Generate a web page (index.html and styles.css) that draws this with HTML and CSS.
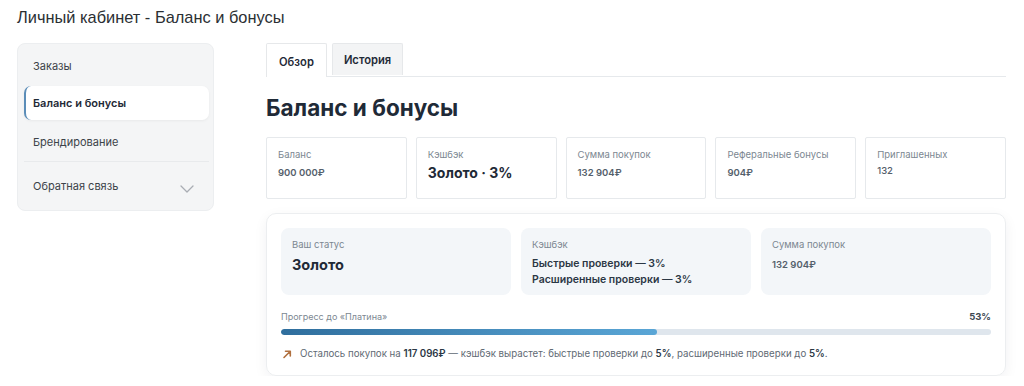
FILE: index.html
```html
<!DOCTYPE html>
<html lang="ru">
<head>
  <meta charset="UTF-8" />
  <meta name="viewport" content="width=device-width, initial-scale=1.0" />
  <title>Личный кабинет - Баланс и бонусы</title>
  <link rel="stylesheet" href="styles.css">
</head>
<body>
  <h1 class="page-title">Личный кабинет - Баланс и бонусы</h1>

  <div class="layout">
    <nav class="sidebar">
      <a class="side-item">Заказы</a>
      <a class="side-item active">Баланс и бонусы</a>
      <a class="side-item tall">Брендирование</a>
      <a class="side-item side-toggle">
        Обратная связь
        <svg class="chevron" width="14" height="8" viewBox="0 0 14 8"><path d="M1 1l6 6 6-6" fill="none" stroke="#a9adb3" stroke-width="1.3" stroke-linecap="round" stroke-linejoin="round"/></svg>
      </a>
    </nav>

    <main class="content">
      <div class="tabs">
        <div class="tab active">Обзор</div>
        <div class="tab">История</div>
      </div>

      <h2 class="heading">Баланс и бонусы</h2>

      <div class="stats">
        <div class="stat">
          <div class="stat-label">Баланс</div>
          <div class="stat-value">900 000₽</div>
        </div>
        <div class="stat">
          <div class="stat-label">Кэшбэк</div>
          <div class="stat-value big">Золото · 3%</div>
        </div>
        <div class="stat">
          <div class="stat-label">Сумма покупок</div>
          <div class="stat-value">132 904₽</div>
        </div>
        <div class="stat">
          <div class="stat-label">Реферальные бонусы</div>
          <div class="stat-value">904₽</div>
        </div>
        <div class="stat">
          <div class="stat-label">Приглашенных</div>
          <div class="stat-value plain">132</div>
        </div>
      </div>

      <section class="status-card">
        <div class="status-boxes">
          <div class="box">
            <div class="box-label">Ваш статус</div>
            <div class="box-value">Золото</div>
          </div>
          <div class="box">
            <div class="box-label">Кэшбэк</div>
            <div class="box-line">Быстрые проверки — 3%</div>
            <div class="box-line">Расширенные проверки — 3%</div>
          </div>
          <div class="box">
            <div class="box-label">Сумма покупок</div>
            <div class="box-sum">132 904₽</div>
          </div>
        </div>

        <div class="progress-head">
          <span>Прогресс до «Платина»</span>
          <b>53%</b>
        </div>
        <div class="progress-track"><div class="progress-fill" style="width: 53%"></div></div>

        <div class="hint">
          <svg width="10" height="10" viewBox="0 0 10 10"><path d="M2 8.5L8 2.5M3.5 2.2H8.3V7" fill="none" stroke="#b0703f" stroke-width="1.6" stroke-linecap="round" stroke-linejoin="round"/></svg>
          <span>Осталось покупок на <b>117 096₽</b> — кэшбэк вырастет: быстрые проверки до <b>5%</b>, расширенные проверки до <b>5%</b>.</span>
        </div>
      </section>
    </main>
  </div>
</body>
</html>
```

FILE: styles.css
```css
:root {
  --text: #1f2a37;
  --muted: #7b8794;
  --line: #e6e9ec;
  --soft: #f3f6f9;
}

* {
  box-sizing: border-box;
}

body {
  margin: 0;
  padding: 0 18px 0 17px;
  font-family: Inter, 'Noto Sans', Arial, sans-serif;
  background: #fff;
  color: var(--text);
}

.page-title {
  margin: 0;
  padding-top: 8px;
  height: 43px;
  font-family: 'Liberation Sans', Arial, sans-serif;
  font-size: 16.4px;
  font-weight: 400;
  color: #2b2f33;
}

.layout {
  display: flex;
  gap: 52px;
  align-items: flex-start;
}

/* sidebar */
.sidebar {
  width: 197px;
  flex-shrink: 0;
  background: #f4f5f6;
  border: 1px solid #eceef0;
  border-radius: 8px;
  padding: 3px 4px 0 6px;
  display: flex;
  flex-direction: column;
}

.side-item {
  display: flex;
  align-items: center;
  height: 37px;
  padding: 0 9px;
  font-size: 11px;
  color: #3c4349;
  cursor: pointer;
}

.side-item.tall {
  height: 39px;
  padding-top: 2px;
}

.side-item.active {
  height: 34px;
  margin: 2px 0 1px;
  background: #fff;
  border-radius: 7px;
  border-left: 2px solid #5b8db8;
  padding-left: 7px;
  font-weight: 600;
  color: var(--text);
  box-shadow: 0 1px 3px rgba(0, 0, 0, 0.05);
}

.side-toggle {
  height: 49px;
  border-top: 1px solid #e8eaec;
  margin-top: 1px;
  justify-content: space-between;
  padding-right: 15px;
}

.chevron {
  margin-top: 6px;
}

/* content */
.content {
  flex: 1;
  min-width: 0;
}

.tabs {
  display: flex;
  gap: 5px;
  border-bottom: 1px solid var(--line);
  height: 34px;
}

.tab {
  padding: 0 11px;
  height: 32px;
  display: flex;
  align-items: center;
  font-size: 11.2px;
  font-weight: 600;
  color: var(--text);
  background: #f3f4f5;
  border: 1px solid #e6e8ea;
  border-bottom: none;
  border-radius: 2px 2px 0 0;
}

.tab.active {
  background: #fff;
  height: 34px;
  padding: 2px 12px 0;
}

.heading {
  margin: 17px 0 15px;
  font-size: 22.5px;
  font-weight: 700;
  color: var(--text);
  line-height: 28px;
}

.stats {
  display: grid;
  grid-template-columns: repeat(5, 1fr);
  gap: 9px;
}

.stat {
  height: 62px;
  border: 1px solid var(--line);
  border-radius: 2px;
  padding: 11px 11px 0;
}

.stat-label {
  font-size: 9.5px;
  color: #7c8791;
  margin-bottom: 7px;
}

.stat-value {
  font-size: 9.5px;
  font-weight: 600;
  color: #54606b;
}

.stat-value.big {
  font-size: 14px;
  font-weight: 700;
  color: var(--text);
  margin-top: -3px;
}

.stat-value.plain {
  font-weight: 500;
  margin-top: -2px;
}

/* status card */
.status-card {
  margin-top: 14px;
  border: 1px solid #eceef0;
  border-radius: 10px;
  padding: 14px 14px 16px;
  box-shadow: 0 4px 14px rgba(30, 40, 50, 0.06);
}

.status-boxes {
  display: grid;
  grid-template-columns: repeat(3, 1fr);
  gap: 10px;
}

.box {
  height: 67px;
  background: var(--soft);
  border-radius: 8px;
  padding: 11px 11px 0;
}

.box-label {
  font-size: 9.5px;
  color: #7c8791;
  margin-bottom: 6px;
}

.box-value {
  font-size: 14.5px;
  font-weight: 700;
  color: var(--text);
}

.box-line {
  font-size: 10.5px;
  font-weight: 600;
  color: #2b3744;
  line-height: 16px;
}

.box-sum {
  font-size: 9.5px;
  font-weight: 600;
  color: #54606b;
  margin-top: 9px;
}

.progress-head {
  display: flex;
  justify-content: space-between;
  margin-top: 16px;
  font-size: 9px;
  color: #7c8791;
}

.progress-head b {
  font-size: 9.5px;
  color: #3d4852;
  font-weight: 700;
}

.progress-track {
  margin-top: 7px;
  height: 6px;
  border-radius: 3px;
  background: #dfe6ed;
  overflow: hidden;
}

.progress-fill {
  height: 100%;
  border-radius: 3px;
  background: linear-gradient(90deg, #2f6e9d, #5aa6d6);
}

.hint {
  display: flex;
  align-items: center;
  gap: 8px;
  margin-top: 13px;
  padding-left: 1px;
  font-size: 9.7px;
  color: #5f6a74;
}

.hint b {
  color: #2b3744;
  font-weight: 600;
}
```
